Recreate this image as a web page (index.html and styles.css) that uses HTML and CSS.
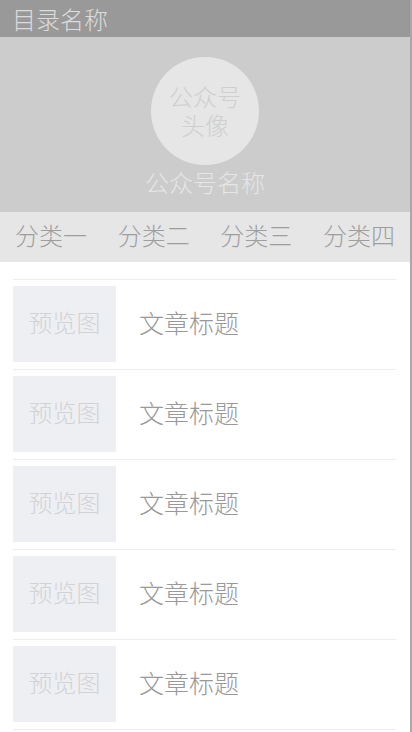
FILE: index.html
```html
<!DOCTYPE html>
<html lang="zh-CN">
<head>
    <meta charset="UTF-8">
    <meta name="viewport" content="width=device-width, initial-scale=1.0">
    <title>目录名称</title>
    <link rel="stylesheet" href="styles.css">
</head>
<body>
    <div class="page">
        <div class="topbar">目录名称</div>

        <div class="hero">
            <div class="avatar">
                <span>公众号</span>
                <span>头像</span>
            </div>
            <div class="account-name">公众号名称</div>
        </div>

        <div class="tabs">
            <div class="tab">分类一</div>
            <div class="tab">分类二</div>
            <div class="tab">分类三</div>
            <div class="tab">分类四</div>
        </div>

        <div class="list">
            <div class="item">
                <div class="thumb">预览图</div>
                <div class="title">文章标题</div>
            </div>
            <div class="item">
                <div class="thumb">预览图</div>
                <div class="title">文章标题</div>
            </div>
            <div class="item">
                <div class="thumb">预览图</div>
                <div class="title">文章标题</div>
            </div>
            <div class="item">
                <div class="thumb">预览图</div>
                <div class="title">文章标题</div>
            </div>
            <div class="item">
                <div class="thumb">预览图</div>
                <div class="title">文章标题</div>
            </div>
        </div>
    </div>
</body>
</html>
```

FILE: styles.css
```css
body {
    margin: 0;
    background-color: #fff;
    font-family: "Noto Sans CJK SC", "Noto Sans", sans-serif;
    font-weight: 300;
}
.page {
    width: 410px;
    min-height: 732px;
    border-right: 2px solid #a8a8a8;
    overflow: hidden;
}
.topbar {
    height: 37px;
    line-height: 37px;
    padding-left: 12px;
    background-color: #999;
    color: #dcdcdc;
    font-size: 24px;
}
.hero {
    height: 175px;
    background-color: #ccc;
    display: flex;
    flex-direction: column;
    align-items: center;
    padding-top: 20px;
    box-sizing: border-box;
}
.avatar {
    width: 108px;
    height: 108px;
    border-radius: 50%;
    background-color: #e6e6e6;
    color: #cfcfcf;
    font-size: 24px;
    line-height: 1;
    display: flex;
    flex-direction: column;
    align-items: center;
    justify-content: center;
    gap: 5px;
    padding-bottom: 2px;
    box-sizing: border-box;
}
.account-name {
    margin-top: 2px;
    color: #e6e6e6;
    font-size: 24px;
    line-height: 30px;
}
.tabs {
    height: 50px;
    background-color: #e6e6e6;
    display: flex;
    justify-content: space-between;
    align-items: center;
    padding: 0 15px 5px;
    box-sizing: border-box;
}
.tab {
    color: #9e9e9e;
    font-size: 24px;
}
.list {
    margin: 17px 14px 0 13px;
}
.item {
    display: flex;
    align-items: center;
    border-top: 1px solid #ececec;
    padding: 6px 0 7px;
}
.item:last-child {
    border-bottom: 1px solid #ececec;
}
.thumb {
    width: 103px;
    height: 76px;
    background-color: #eeeff3;
    color: #d2d2d4;
    font-size: 24px;
    display: flex;
    align-items: center;
    justify-content: center;
    padding-bottom: 5px;
    box-sizing: border-box;
}
.title {
    margin-left: 23px;
    padding-bottom: 5px;
    color: #999;
    font-size: 25px;
}
```
